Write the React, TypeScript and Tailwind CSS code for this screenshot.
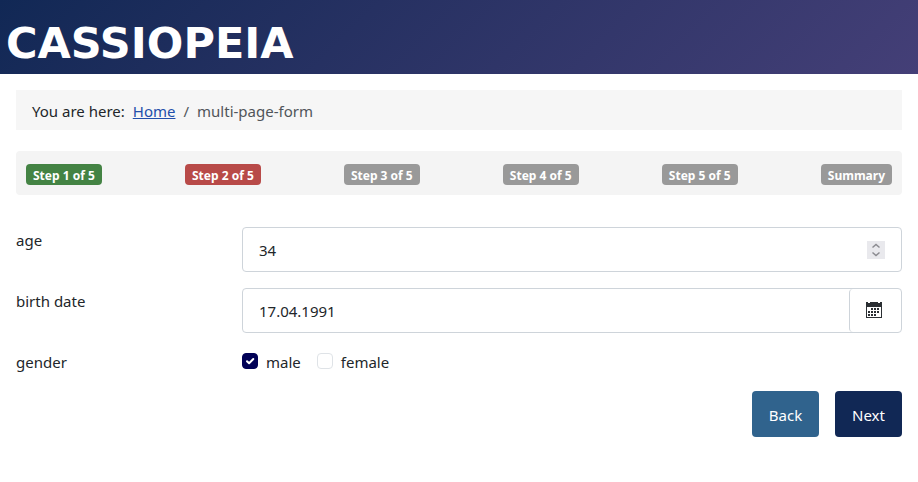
import { useState } from 'react';

type StepState = 'done' | 'current' | 'pending';

const STEPS: { label: string; state: StepState }[] = [
  { label: 'Step 1 of 5', state: 'done' },
  { label: 'Step 2 of 5', state: 'current' },
  { label: 'Step 3 of 5', state: 'pending' },
  { label: 'Step 4 of 5', state: 'pending' },
  { label: 'Step 5 of 5', state: 'pending' },
  { label: 'Summary', state: 'pending' },
];

const STEP_COLORS: Record<StepState, string> = {
  done: 'bg-[#448344]',
  current: 'bg-[#b84a48]',
  pending: 'bg-[#999999]',
};

const GENDERS = ['male', 'female'];

export default function App() {
  const [age, setAge] = useState(34);
  const [birthDate, setBirthDate] = useState('17.04.1991');
  const [genders, setGenders] = useState<string[]>(['male']);

  const toggleGender = (value: string) =>
    setGenders((prev) => (prev.includes(value) ? prev.filter((g) => g !== value) : [...prev, value]));

  return (
    <div className="min-h-screen bg-white font-['Noto_Sans',sans-serif] text-[15px] leading-6 text-[#22262a]">
      <header className="bg-linear-135 from-[#112855] to-[#443f77] px-[6px] pt-[18px] pb-[6px]">
        <a href="#" className="block font-['DejaVu_Sans',sans-serif] text-[43px] leading-[50px] font-bold text-white">
          CASSIOPEIA
        </a>
      </header>

      <main className="p-4">
        <nav aria-label="Breadcrumb" className="bg-[#f6f6f6] px-4 pt-[9px] pb-[7px]">
          <ol className="flex gap-2">
            <li>You are here:</li>
            <li>
              <a href="#" className="text-[#224faa] underline">Home</a>
            </li>
            <li className="flex gap-2 text-[#50555a]" aria-current="page">
              <span>/</span>
              multi-page-form
            </li>
          </ol>
        </nav>

        <ol className="mt-[21px] flex justify-between rounded bg-[#f4f4f4] px-[10px] pt-[13px] pb-[10px]">
          {STEPS.map(({ label, state }) => (
            <li
              key={label}
              className={`rounded px-[7px] pt-[3px] text-[12px] leading-[18px] font-bold whitespace-nowrap text-white ${STEP_COLORS[state]}`}
            >
              {label}
            </li>
          ))}
        </ol>

        <form className="mt-8 flex flex-col" onSubmit={(e) => e.preventDefault()}>
          <div className="mb-4 flex">
            <label htmlFor="age" className="w-[226px] shrink-0 pt-px">age</label>
            <div className="flex h-[45px] min-w-0 flex-1 items-center rounded border border-[#ced4da] pr-4">
              <input
                id="age"
                type="number"
                value={age}
                onChange={(e) => setAge(Number(e.target.value))}
                className="h-full min-w-0 flex-1 appearance-none px-4 outline-none [-moz-appearance:textfield] [&::-webkit-inner-spin-button]:appearance-none"
              />
              <div className="flex w-[18px] flex-col bg-[#e9e9ed] text-[#8b8b90]">
                <button type="button" aria-label="Increase age" onClick={() => setAge(age + 1)}>
                  <svg viewBox="0 0 18 9" fill="none" stroke="currentColor" strokeWidth={1.5} className="block h-[9px] w-full">
                    <path d="M5.5 6.5 9 3.5 12.5 6.5" />
                  </svg>
                </button>
                <button type="button" aria-label="Decrease age" onClick={() => setAge(age - 1)}>
                  <svg viewBox="0 0 18 9" fill="none" stroke="currentColor" strokeWidth={1.5} className="block h-[9px] w-full">
                    <path d="M5.5 2.5 9 5.5 12.5 2.5" />
                  </svg>
                </button>
              </div>
            </div>
          </div>

          <div className="mb-4 flex">
            <label htmlFor="birth-date" className="w-[226px] shrink-0 pt-px">birth date</label>
            <div className="flex h-[45px] min-w-0 flex-1 rounded border border-[#ced4da]">
              <input
                id="birth-date"
                type="text"
                value={birthDate}
                onChange={(e) => setBirthDate(e.target.value)}
                className="min-w-0 flex-1 px-4 outline-none"
              />
              <button
                type="button"
                aria-label="Open the calendar"
                className="flex w-[52px] items-center justify-center rounded-l border-l border-[#ced4da] pr-1 pb-px"
              >
                <CalendarIcon className="h-4 w-4 text-[#2b2f33]" />
              </button>
            </div>
          </div>

          <fieldset className="flex">
            <legend className="float-left w-[226px] shrink-0 pt-px">gender</legend>
            <div className="flex gap-4 pt-px">
              {GENDERS.map((value) => (
                <label key={value} className="flex gap-2">
                  <span className="mt-[3px] grid h-4 w-4">
                    <input
                      type="checkbox"
                      name="gender"
                      value={value}
                      checked={genders.includes(value)}
                      onChange={() => toggleGender(value)}
                      className="col-start-1 row-start-1 h-4 w-4 appearance-none rounded border border-[#dfe3e7] bg-white checked:border-[#010156] checked:bg-[#010156]"
                    />
                    {genders.includes(value) && (
                      <svg
                        viewBox="0 0 16 16"
                        fill="none"
                        stroke="white"
                        strokeWidth={2}
                        strokeLinecap="round"
                        strokeLinejoin="round"
                        className="pointer-events-none col-start-1 row-start-1 h-4 w-4"
                      >
                        <path d="m5 8.2 2.1 2.1L11.3 6" />
                      </svg>
                    )}
                  </span>
                  {value}
                </label>
              ))}
            </div>
          </fieldset>

          <div className="mt-[17px] flex justify-end gap-4">
            <button type="button" className="h-[46px] w-[67px] rounded bg-[#30638d] pt-[2px] text-white">Back</button>
            <button type="submit" className="h-[46px] w-[67px] rounded bg-[#112855] pt-[2px] text-white">Next</button>
          </div>
        </form>
      </main>
    </div>
  );
}

function CalendarIcon({ className }: { className?: string }) {
  return (
    <svg viewBox="0 0 16 16" fill="currentColor" className={className}>
      <path d="M0 0h2v1h2V0h8v1h2V0h2v16H0V0Zm1 5v10h14V5H1Z" fillRule="evenodd" />
      {[5, 8, 11].map((x) => <rect key={x} x={x} y={6} width={2} height={2} />)}
      {[2, 5, 8, 11].map((x) => <rect key={x} x={x} y={9} width={2} height={2} />)}
      {[2, 5, 8].map((x) => <rect key={x} x={x} y={12} width={2} height={2} />)}
    </svg>
  );
}
